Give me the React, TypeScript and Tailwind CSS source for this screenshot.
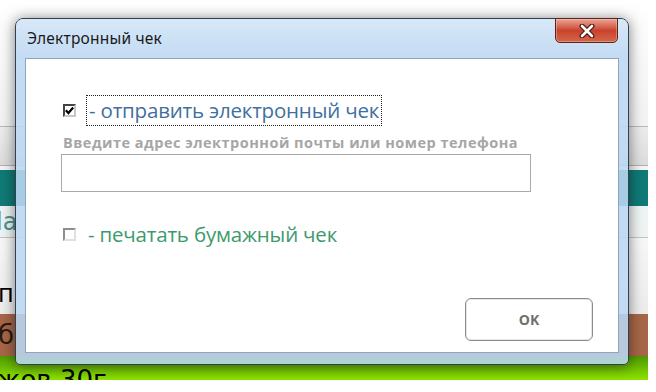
import React from "react";

function Check({ checked, light }: { checked?: boolean; light?: boolean }) {
  return (
    <div
      className={
        light
          ? "w-[13px] h-[13px] border-[2px] border-t-[#8e8e8e] border-l-[#8e8e8e] border-r-[#e0e0e0] border-b-[#e0e0e0] bg-white"
          : "w-[13px] h-[13px] border-[2px] border-t-[#444] border-l-[#444] border-r-[#c8c8c8] border-b-[#c8c8c8] bg-white flex items-center justify-center"
      }
    >
      {checked && (
        <svg width="9" height="9" viewBox="0 0 9 9">
          <path d="M0.8 4.2 L3.4 7 L8.2 1.6" stroke="#000" strokeWidth="2.2" fill="none" />
        </svg>
      )}
    </div>
  );
}

export default function App() {
  const bgFont = { fontFamily: '"DejaVu Sans", sans-serif' };
  return (
    <div className="relative w-[656px] h-[392px] overflow-hidden bg-white">
      {/* background application */}
      <div className="w-[648px] flex flex-col" style={bgFont}>
        <div className="h-[126px] bg-gradient-to-b from-white to-[#f2f2f2]" />
        <div className="h-px bg-[#b8b8b8]" />
        <div className="h-[38px] bg-gradient-to-b from-[#ececec] to-[#dcdcdc]" />
        <div className="h-px bg-[#b0b0b0]" />
        <div className="h-[4px] bg-[#f4f4f4]" />
        <div className="h-[36px] bg-[#107a76]" />
        <div className="h-[31px] bg-[#eef3f3] flex items-center text-[24px] text-[#4f9191] leading-none">
          <span className="-ml-[4px]">la</span>
        </div>
        <div className="h-px bg-[#c4c4c4]" />
        <div className="h-[76px] bg-gradient-to-b from-[#f7f7f7] to-[#ececec] flex items-end pb-[8px] text-[24px] text-black leading-none">
          <span className="-ml-[2px]">п</span>
        </div>
        <div className="h-[42px] bg-[#a76647] flex items-center text-[26px] text-[#2a1a10] leading-none">
          <span className="-ml-[2px]">б</span>
        </div>
        <div className="h-[24px] bg-gradient-to-b from-[#4e9a00] to-[#8ee400] overflow-hidden text-[26px] text-black leading-none">
          <span className="block mt-[11px] -ml-[3px]">жов 30г</span>
        </div>
      </div>

      {/* dialog window */}
      <div
        className="absolute left-[15px] top-[18px] w-[614px] h-[347px] rounded-t-[8px] rounded-b-[5px] border border-[#33404f] bg-[#bcd7f2]/[0.88] shadow-[0_1px_14px_rgba(0,0,0,0.5)] flex flex-col px-[9px] pb-[11px]"
        style={{ fontFamily: '"Open Sans", "Noto Sans", sans-serif' }}
      >
        <div className="absolute inset-x-0 top-0 h-[40px] rounded-t-[7px] bg-gradient-to-b from-[#dcebf9]/80 to-[#bfd8f1]/40 pointer-events-none" />
        <div className="relative h-[39px] flex items-center pl-[2px]">
          <span className="text-[15.5px] text-[#1a1a1a] tracking-[0.2px]" style={{ fontFamily: '"Noto Sans", sans-serif' }}>
            Электронный чек
          </span>
          <div className="absolute -top-px right-[1px] w-[63px] h-[25px] rounded-b-[5px] border border-[#5c2418] bg-gradient-to-b from-[#e9a597] via-[#c9412c] to-[#d4674a] flex items-center justify-center shadow-[inset_0_0_0_1px_rgba(255,220,210,0.35)]">
            <svg width="18" height="14" viewBox="0 0 18 14">
              <path d="M4 2 L14 12 M14 2 L4 12" stroke="#4a1a14" strokeWidth="5" strokeLinecap="round" />
              <path d="M4 2 L14 12 M14 2 L4 12" stroke="#ffffff" strokeWidth="2.6" strokeLinecap="round" />
            </svg>
          </div>
        </div>

        <div className="relative flex-1 bg-white border border-[#8fa5bf] flex flex-col pl-[35px] pt-[36px]">
          <div className="flex items-center h-[31px]">
            <div className="ml-[2px]">
              <Check checked />
            </div>
            <div className="ml-[10px] h-[31px] border border-dotted border-[#222] flex items-center px-[2px]">
              <span className="text-[20.5px] text-[#416f9f] leading-none tracking-[-0.2px]">
                - отправить электронный чек
              </span>
            </div>
          </div>
          <div className="mt-[8px] text-[14.5px] font-bold text-[#a6a6a6] leading-[17px] ml-[2px] tracking-[0.5px]">
            Введите адрес электронной почты или номер телефона
          </div>
          <div className="mt-[3px] w-[470px] h-[38px] border border-[#a9a9a9] bg-white" />
          <div className="mt-[27px] flex items-center h-[30px]">
            <div className="ml-[2px]">
              <Check light />
            </div>
            <span className="ml-[12px] text-[20.5px] text-[#3d9a6c] leading-none tracking-[-0.2px]">
              - печатать бумажный чек
            </span>
          </div>
          <div className="mt-[49px] flex justify-end pr-[25px]">
            <div className="w-[128px] h-[43px] rounded-[6px] border-[1.5px] border-[#8c8c8c] bg-white shadow-[inset_0_0_0_1px_#e6e6e6] flex items-center justify-center">
              <span className="text-[14px] font-bold text-[#707070]">OK</span>
            </div>
          </div>
        </div>
      </div>
    </div>
  );
}
